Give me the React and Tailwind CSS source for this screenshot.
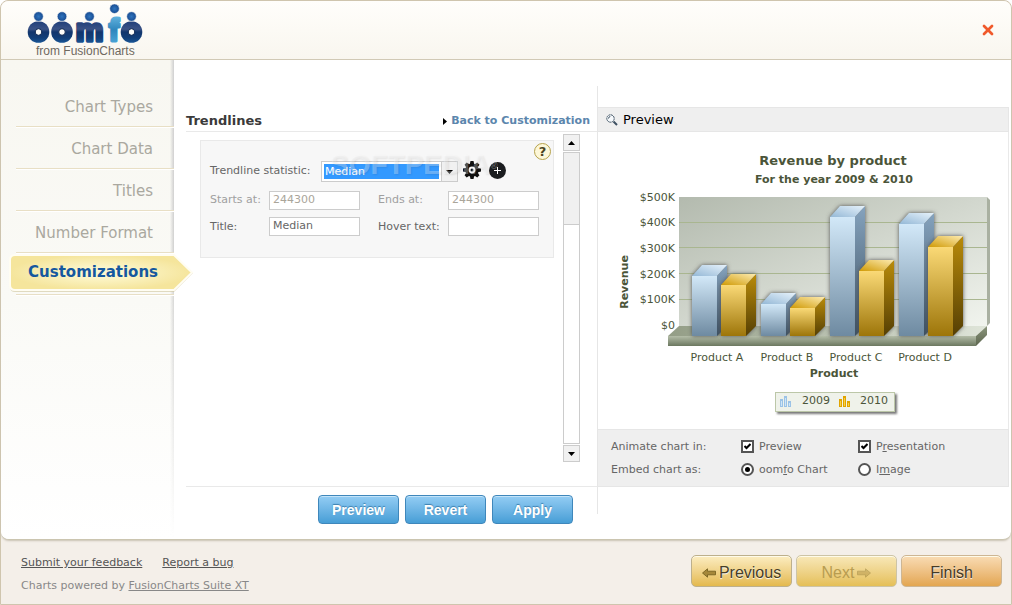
import React from "react";
import { X } from "lucide-react";

const steps = ["Chart Types", "Chart Data", "Titles", "Number Format"];

const axisLabels = [
  { text: "$500K", y: 201 },
  { text: "$400K", y: 226 },
  { text: "$300K", y: 252 },
  { text: "$200K", y: 278 },
  { text: "$100K", y: 303 },
  { text: "$0", y: 329 },
];

const bars = [
  { x: 692, top: 276, kind: "blue" },
  { x: 721, top: 285, kind: "gold" },
  { x: 761, top: 304, kind: "blue" },
  { x: 790, top: 308, kind: "gold" },
  { x: 830, top: 217, kind: "blue" },
  { x: 859, top: 271, kind: "gold" },
  { x: 899, top: 224, kind: "blue" },
  { x: 928, top: 247, kind: "gold" },
];

const categories = [
  { text: "Product A", x: 717 },
  { text: "Product B", x: 787 },
  { text: "Product C", x: 856 },
  { text: "Product D", x: 925 },
];

function Logo() {
  return (
    <svg width="120" height="54" viewBox="26 3 120 54" className="block" role="img" aria-label="oomfo from FusionCharts">
      <defs>
        <linearGradient id="logoDark" gradientUnits="userSpaceOnUse" x1="0" y1="20" x2="0" y2="44">
          <stop offset="0" stopColor="#1c3c78" />
          <stop offset="0.38" stopColor="#3a5285" />
          <stop offset="0.5" stopColor="#12366d" />
          <stop offset="0.75" stopColor="#123f78" />
          <stop offset="1" stopColor="#1a5a9e" />
        </linearGradient>
        <linearGradient id="logoLight" gradientUnits="userSpaceOnUse" x1="0" y1="17" x2="0" y2="43">
          <stop offset="0" stopColor="#5fb0dc" />
          <stop offset="0.5" stopColor="#2f86bd" />
          <stop offset="1" stopColor="#4aa3d6" />
        </linearGradient>
        <radialGradient id="logoHead">
          <stop offset="0" stopColor="#2e74bd" />
          <stop offset="1" stopColor="#184a90" />
        </radialGradient>
      </defs>
      {[38.5, 62, 131.5].map((cx) => (
        <g key={cx}>
          <circle cx={cx} cy="32" r="10.8" fill="url(#logoDark)" />
          <circle cx={cx} cy="32" r="3.3" fill="#fdfcf8" stroke="#0b2550" strokeWidth="1" />
        </g>
      ))}
      <text x="89.5" y="41" textAnchor="middle" fontFamily="Liberation Sans, sans-serif" fontWeight="700" fontSize="31" fill="url(#logoDark)" stroke="url(#logoDark)" strokeWidth="3.500" strokeLinejoin="round">m</text>
      <text x="114" y="41" textAnchor="middle" fontFamily="Liberation Sans, sans-serif" fontWeight="700" fontSize="31" fill="url(#logoLight)" stroke="url(#logoLight)" strokeWidth="3" strokeLinejoin="round">f</text>
      {[38.5, 62, 89.5, 131.5].map((cx) => (
        <circle key={cx} cx={cx} cy="16.5" r="4.800" fill="url(#logoHead)" stroke="#fdfcf8" strokeWidth="0.6" />
      ))}
      <circle cx="114.5" cy="8.700" r="4.800" fill="url(#logoHead)" stroke="#fdfcf8" strokeWidth="0.6" />
      <text x="36" y="55" fontFamily="Liberation Sans, sans-serif" fontSize="12" fill="#6f695f">from FusionCharts</text>
    </svg>
  );
}

function Bar({ x, top, kind }) {
  const w = 25;
  const d = 10;
  return (
    <g>
      <path d={`M${x} ${top}L${x + d} ${top - d - 1}H${x + w + d}V${336 - d}L${x + w} 336H${x}Z`} fill="#555" filter="url(#barShadow)" />
      <path d={`M${x + w} ${top}L${x + w + d} ${top - d - 1}V${336 - d}L${x + w} 336Z`} fill={kind === "blue" ? "url(#blueSide)" : "url(#goldSide)"} />
      <path d={`M${x} ${top}L${x + d} ${top - d - 1}H${x + w + d}L${x + w} ${top}Z`} fill={kind === "blue" ? "url(#blueTop)" : "url(#goldTop)"} />
      <path d={`M${x} ${top}H${x + w}V336H${x}Z`} fill={kind === "blue" ? "url(#blueFront)" : "url(#goldFront)"} />
    </g>
  );
}

function Gradient({ id, from, to, x2 = 0, y2 = 1, y1 = 0 }) {
  return (
    <linearGradient id={id} x1="0" y1={y1} x2={x2} y2={y2}>
      <stop offset="0" stopColor={from} />
      <stop offset="1" stopColor={to} />
    </linearGradient>
  );
}

function RevenueChart() {
  return (
    <svg width="410" height="297" viewBox="598 132 410 297" className="mx-auto block max-w-full" fontFamily="DejaVu Sans, Verdana, sans-serif" fontSize="11" fill="#4b5539">
      <defs>
        <Gradient id="wall" from="#b3baae" to="#f1f4ee" x2={1} />
        <Gradient id="floorTop" from="#939d86" to="#dfe5d9" x2={1} y2={0} />
        <Gradient id="floorFront" from="#b4bda8" to="#6c7860" />
        <Gradient id="floorSide" from="#8b967c" to="#5d664f" />
        <Gradient id="blueFront" from="#d2e8f8" to="#6e8aa1" />
        <Gradient id="blueSide" from="#85a3be" to="#3c4f60" />
        <Gradient id="blueTop" from="#94b8d6" to="#e6f2fb" x2={1} y1={1} y2={0} />
        <Gradient id="goldFront" from="#fad976" to="#9d7509" />
        <Gradient id="goldSide" from="#b98b0a" to="#553f04" />
        <Gradient id="goldTop" from="#d09a05" to="#fdebb0" x2={1} y1={1} y2={0} />
        <filter id="barShadow" x="-30%" y="-30%" width="160%" height="160%">
          <feGaussianBlur stdDeviation="2.2" />
        </filter>
        <filter id="legendShadow" x="-10%" y="-30%" width="120%" height="180%">
          <feGaussianBlur stdDeviation="1.2" />
        </filter>
      </defs>

      <text x="833" y="165" textAnchor="middle" fontWeight="700" fontSize="13">Revenue by product</text>
      <text x="834" y="183" textAnchor="middle" fontWeight="700">For the year 2009 &amp; 2010</text>

      <path d="M987 197L990 200V323L987 326Z" fill="#a9b0a1" />
      <rect x="679" y="197" width="308" height="129" fill="url(#wall)" />
      {[222, 247, 273, 299].map((y) => (
        <rect key={y} x="679" y={y} width="308" height="1" fill="#a9b690" />
      ))}
      <path d="M668 336L679 326H987L976 336Z" fill="url(#floorTop)" />
      <rect x="668" y="336" width="308" height="10" fill="url(#floorFront)" />
      <path d="M976 336L987 326V335L976 346Z" fill="url(#floorSide)" />
      {bars.map((bar) => (
        <Bar key={bar.x} {...bar} />
      ))}

      {axisLabels.map((label) => (
        <text key={label.text} x="675" y={label.y} textAnchor="end">{label.text}</text>
      ))}
      {categories.map((label) => (
        <text key={label.text} x={label.x} y="361" textAnchor="middle">{label.text}</text>
      ))}
      <text x="834" y="377" textAnchor="middle" fontWeight="700">Product</text>
      <text transform="translate(628 282) rotate(-90)" textAnchor="middle" fontWeight="700">Revenue</text>

      <rect x="777" y="394" width="120" height="20" fill="#777" filter="url(#legendShadow)" />
      <rect x="775.5" y="392.5" width="119" height="19" fill="#eff2ea" stroke="#bcc7a8" />
      <g fill="#9cc3e6">
        <path d="M780 399h3v8h-3zM784 396h3v11h-3zM788 401h3v6h-3z" />
        <path d="M781 401h1v5h-1zM785 398h1v8h-1zM789 403h1v3h-1z" fill="#cfe6f8" />
      </g>
      <g fill="#e0a400">
        <path d="M839 399h3v8h-3zM843 396h3v11h-3zM847 401h3v6h-3z" />
        <path d="M840 401h1v5h-1zM844 398h1v8h-1zM848 403h1v3h-1z" fill="#f9cf45" />
      </g>
      <text x="802" y="404">2009</text>
      <text x="860" y="404">2010</text>
    </svg>
  );
}

function Gear() {
  return (
    <svg width="18" height="18" viewBox="-9 -9 18 18" className="block" aria-hidden="true">
      {[0, 45, 90, 135, 180, 225, 270, 315].map((angle) => (
        <path key={angle} d="M-2.400 -5L-1.500 -9H1.500L2.400 -5Z" fill="#111" transform={`rotate(${angle})`} />
      ))}
      <circle r="5" fill="#f7f7f7" stroke="#111" strokeWidth="3.200" />
      <circle r="1.500" fill="#111" />
    </svg>
  );
}

function BlockArrow({ flip, fill }) {
  return (
    <svg width="14" height="10" viewBox="0 0 14 10" aria-hidden="true">
      <path d="M0.500 5L5.500 0.800V3.200H13.500V6.800H5.500V9.200Z" fill={fill} stroke="#6e5b1c" strokeWidth="0.800" transform={flip ? "translate(14 0) scale(-1 1)" : undefined} />
    </svg>
  );
}

function Triangle({ up }) {
  return (
    <svg width="7" height="4" viewBox="0 0 7 4" aria-hidden="true">
      <path d={up ? "M0 4L3.500 0L7 4Z" : "M0 0H7L3.500 4Z"} fill="#000" />
    </svg>
  );
}

function Tick({ id, children }) {
  return (
    <div className="flex items-center gap-[5px]">
      <span className="relative grid size-[13px] place-items-center">
        <input id={id} type="checkbox" defaultChecked className="peer size-[13px] appearance-none border-2 border-[#555] bg-white" />
        <svg width="7" height="7" viewBox="0 0 7 7" className="pointer-events-none invisible absolute peer-checked:visible" aria-hidden="true">
          <path d="M0.500 3L2.500 5L6.500 1" fill="none" stroke="#000" strokeWidth="2" />
        </svg>
      </span>
      <label htmlFor={id}>{children}</label>
    </div>
  );
}

function Choice({ id, checked, children }) {
  return (
    <div className="flex items-center gap-[5px]">
      <span className="relative grid size-[13px] place-items-center">
        <input id={id} type="radio" name="embed" defaultChecked={checked} className="peer size-[13px] appearance-none rounded-full border-2 border-[#555] bg-white" />
        <span className="pointer-events-none invisible absolute size-[5px] rounded-full bg-black peer-checked:visible" />
      </span>
      <label htmlFor={id}>{children}</label>
    </div>
  );
}

const field = "h-[19px] w-[91px] border border-[#ccc] bg-white px-[3px] pb-[2px] text-[11px] outline-none";
const blueButton =
  "h-[29px] w-[81px] rounded-[4px] border border-[#3f87bb] bg-linear-to-b from-[#93cdf4] to-[#469ed6] pt-[2px] font-['Liberation_Sans',Arial,sans-serif] text-[14px] font-bold text-white shadow-[inset_0_1px_0_#c3e4fa] [text-shadow:0_-1px_1px_#3b7fae]";
const wizardButton =
  "flex h-8 w-[101px] items-center justify-center gap-[3px] rounded-[5px] border pt-[3px] font-['Liberation_Sans',Arial,sans-serif] text-[16px] shadow-[inset_0_1px_0_#fffbe9]";

export default function App() {
  return (
    <div className="flex min-h-screen flex-col rounded-t-lg border border-[#cfc5ae] bg-[#f4efe9] font-['DejaVu_Sans',Verdana,sans-serif] text-[11px] text-[#666]">
      <header className="flex h-[59px] items-start justify-between rounded-t-lg border-b border-[#d2cab6] bg-linear-to-b from-[#fffefb] to-[#f9f6ef] pt-[2px] pr-[15px] pl-[25px]">
        <Logo />
        <button type="button" aria-label="Close" className="mt-[19px] text-[#f0592b]">
          <X size={16} strokeWidth={4} />
        </button>
      </header>

      <div className="flex flex-1 rounded-b-lg border-b border-[#cbc5b0] bg-white shadow-[0_1px_2px_#c9c2b4]">
        <nav className="relative w-[173px] shrink-0 rounded-bl-lg bg-linear-to-b from-[#f8f7f1] via-[#fafaf6] to-white pt-[25px]">
          <span className="absolute inset-y-0 right-0 w-1 bg-linear-to-r from-transparent to-[#cfcfcf] [mask-image:linear-gradient(#000_40%,transparent)]" />
          <ul className="pl-[15px] text-[15px] text-[#aaa89f]">
            {steps.map((step) => (
              <li key={step} className="relative h-[42px] border-b border-[#e8dfc5] pr-[21px] text-right leading-[44px] shadow-[0_1px_0_#fff]">
                <a href="#">{step}</a>
              </li>
            ))}
            <li className="relative h-[42px] border-b border-[#e8dfc5] pr-4 text-right leading-[38px] font-bold text-[#15589f] shadow-[0_1px_0_#fff]">
              <svg width="187" height="42" viewBox="0 0 187 42" className="absolute top-0 -left-2" aria-hidden="true">
                <defs>
                  <radialGradient id="tag" cx="0.5" cy="0.5" r="0.5">
                    <stop offset="0.2" stopColor="#fdf8d0" />
                    <stop offset="1" stopColor="#f5e59c" />
                  </radialGradient>
                </defs>
                <path d="M7 3H166L185 20L166 39H7Q2 39 2 34V7Q2 3 7 3Z" fill="#cfc59c" opacity="0.6" />
                <path d="M7 2H166L184 19.500L166 37H7Q2 37 2 32V7Q2 2 7 2Z" fill="url(#tag)" stroke="#fffdf2" strokeWidth="2" />
              </svg>
              <a href="#" className="relative" aria-current="step">Customizations</a>
            </li>
          </ul>
        </nav>

        <main className="flex min-w-0 flex-1 pt-[26px] pr-[2px] pl-[12px]">
          <section className="flex h-[428px] flex-1 flex-col border-r border-[#e6e6e6]">
            <div className="flex h-[46px] items-end justify-between border-b border-[#e9e9e9] pr-[7px] pb-[2px] leading-4 font-bold">
              <h1 className="text-[13px] text-[#3a3a3a]">Trendlines</h1>
              <a href="#" className="flex items-center gap-[3px] text-[11px] text-[#5c86ad]">
                <svg width="5" height="7" viewBox="0 0 5 7" aria-hidden="true">
                  <path d="M0 0L4 3.500L0 7Z" fill="#000" />
                </svg>
                Back to Customization
              </a>
            </div>

            <div className="flex flex-1 gap-[9px] border-b border-[#e9e9e9] pt-[2px] pr-[17px] pl-[14px]">
              <form className="relative mt-[6px] h-[118px] flex-1 border border-[#e9e9e9] bg-[#f7f7f7] pt-5 pl-[9px]">
                <div className="flex h-[21px] items-center">
                  <label htmlFor="statistic" className="w-[111px]">Trendline statistic:</label>
                  <div className="flex h-[21px] w-[137px] border border-[#ccc] bg-white">
                    <select id="statistic" className="my-[2px] ml-[2px] min-w-0 flex-1 appearance-none bg-[#3399ff] pl-px text-[11px] leading-4 text-white">
                      <option>Median</option>
                    </select>
                    <span className="ml-[2px] grid w-4 place-items-center border-l border-[#ccc] bg-[#f1f1f1]">
                      <Triangle />
                    </span>
                  </div>
                  <div className="flex items-center gap-2 pb-[3px] pl-[5px]">
                    <button type="button" aria-label="Settings">
                      <Gear />
                    </button>
                    <button type="button" aria-label="Add" className="grid size-[17px] place-items-center rounded-full bg-[#1b1d1f]">
                      <svg width="7" height="7" viewBox="0 0 7 7" aria-hidden="true">
                        <path d="M3 0H4V3H7V4H4V7H3V4H0V3H3Z" fill="#fff" />
                      </svg>
                    </button>
                  </div>
                </div>
                <div className="mt-[9px] grid grid-cols-[59px_109px_70px_91px] items-center gap-y-[7px]">
                  <label htmlFor="start" className="text-[#a0a0a0]">Starts at:</label>
                  <input id="start" defaultValue="244300" className={`${field} text-[#aaa59a]`} />
                  <label htmlFor="end" className="text-[#a0a0a0]">Ends at:</label>
                  <input id="end" defaultValue="244300" className={`${field} text-[#aaa59a]`} />
                  <label htmlFor="title" className="pt-[2px]">Title:</label>
                  <input id="title" defaultValue="Median" className={field} />
                  <label htmlFor="hover" className="pt-[2px] whitespace-nowrap">Hover text:</label>
                  <input id="hover" className={field} />
                </div>
                <button type="button" aria-label="Help" className="absolute top-[2px] right-[2px] grid size-[17px] place-items-center rounded-full border-[1px] border-[#b5a24c] bg-[#fdf7d8] text-[13px] leading-none font-bold text-[#4b4420]">
                  ?
                </button>
                <span className="pointer-events-none absolute top-[6px] left-[129px] font-['Liberation_Sans',Arial,sans-serif] text-[28px] leading-9 font-bold text-white/30 [text-shadow:1px_1px_2px_rgb(0_0_0/0.08)]">
                  SOFTPEDIA<sup className="text-[10px]">®</sup>
                </span>
              </form>
              <div className="flex h-[328px] w-[17px] flex-col gap-px">
                <button type="button" aria-label="Scroll up" className="grid h-[17px] place-items-center border border-[#ccc] bg-[#f1f1f1]">
                  <Triangle up />
                </button>
                <div className="flex-1 border border-[#ccc] bg-white">
                  <div className="h-[72px] border-b border-[#ccc] bg-[#f0f0f0]" />
                </div>
                <button type="button" aria-label="Scroll down" className="grid h-[17px] place-items-center border border-[#ccc] bg-[#f1f1f1]">
                  <Triangle />
                </button>
              </div>
            </div>

            <div className="flex h-[27px] shrink-0 justify-end gap-[6px] pt-2 pr-6">
              <button type="button" className={blueButton}>Preview</button>
              <button type="button" className={blueButton}>Revert</button>
              <button type="button" className={blueButton}>Apply</button>
            </div>
          </section>

          <section className="w-[411px] shrink-0 pt-[21px]">
            <h2 className="flex h-[25px] items-center gap-[5px] border border-l-0 border-[#e6e6e6] bg-[#efefef] pl-2 text-[13px] text-black">
              <svg width="12" height="12" viewBox="0 0 12 12" aria-hidden="true">
                <circle cx="4.500" cy="4.500" r="3.700" fill="#f6f9fc" stroke="#3d5061" strokeDasharray="2 0.500" />
                <path d="M2.500 4.500Q2.500 2.700 4.300 2.500" fill="none" stroke="#3d5061" />
                <path d="M7.500 7.500L11 11" stroke="#3d5061" strokeWidth="2" />
              </svg>
              Preview
            </h2>
            <div className="border-r border-[#e9e9e9]">
              <RevenueChart />
            </div>
            <div className="grid h-[58px] grid-cols-[130px_117px_1fr] content-center items-center gap-y-[6px] border border-l-0 border-[#e6e6e6] bg-[#efefef] pb-px pl-[13px] leading-[17px]">
              <span>Animate chart in:</span>
              <Tick id="in-preview">Preview</Tick>
              <Tick id="in-presentation">P<u>r</u>esentation</Tick>
              <span>Embed chart as:</span>
              <Choice id="as-chart" checked>oom<u>f</u>o Chart</Choice>
              <Choice id="as-image">I<u>m</u>age</Choice>
            </div>
          </section>
        </main>
      </div>

      <footer className="flex h-16 items-start justify-between pr-[9px] pl-5">
        <div className="pt-[14px] leading-[18px]">
          <div className="flex gap-5 text-[#555]">
            <a href="#" className="underline">Submit your feedback</a>
            <a href="#" className="underline">Report a bug</a>
          </div>
          <p className="mt-[5px] text-[#888]">
            Charts powered by <a href="#" className="underline">FusionCharts Suite XT</a>
          </p>
        </div>
        <div className="flex gap-1 pt-[15px]">
          <button type="button" className={`${wizardButton} border-[#bdb08c] bg-linear-to-b from-[#fcedc0] to-[#e4b94c] text-[#463e28] [text-shadow:0_1px_1px_#fff]`}>
            <BlockArrow fill="#a5873a" />
            Previous
          </button>
          <button type="button" disabled className={`${wizardButton} border-[#cdc4a6] bg-linear-to-b from-[#f8e8b8] to-[#e5bf56] text-[#b89c50]`}>
            Next
            <span className="opacity-40">
              <BlockArrow flip fill="#a5873a" />
            </span>
          </button>
          <button type="button" className={`${wizardButton} border-[#cdb694] bg-linear-to-b from-[#f9dcb4] to-[#e3a650] text-[#463a26] [text-shadow:0_1px_1px_#fff]`}>
            Finish
          </button>
        </div>
      </footer>
    </div>
  );
}
